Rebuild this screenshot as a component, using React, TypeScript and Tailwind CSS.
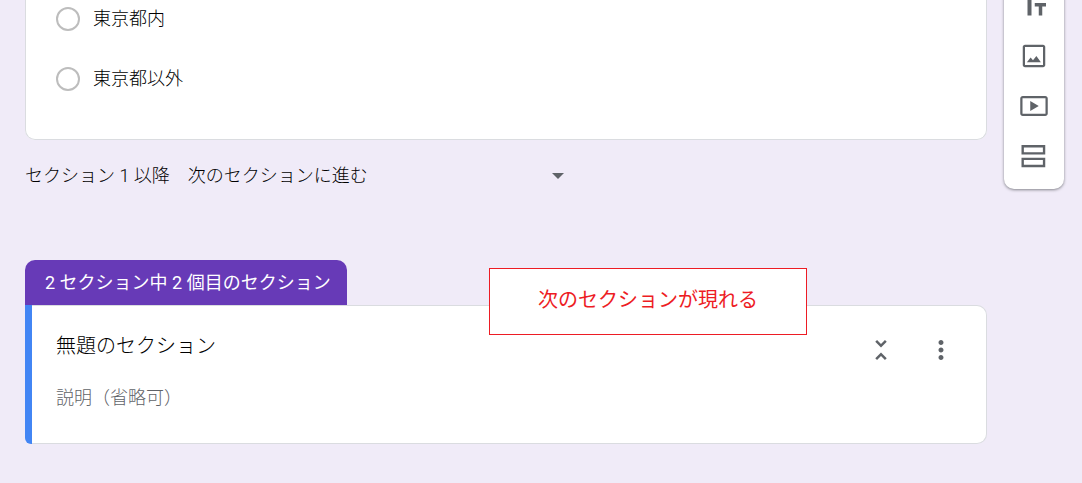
import type { ReactNode } from "react";

const options = ["東京都内", "東京都以外"];

function Icon({ children }: { children: ReactNode }) {
  return (
    <svg
      viewBox="0 0 24 24"
      className="h-[30px] w-[30px]"
      fill="currentColor"
      aria-hidden="true"
    >
      {children}
    </svg>
  );
}

const tools = [
  {
    label: "タイトルと説明を追加",
    icon: <path d="M2 4v3h4.800v12.600h3.200V7h5V4H2zM21.600 9.600h-9v2.800h3.200v7.200h2.800v-7.200h3V9.600z" />,
  },
  {
    label: "画像を追加",
    icon: (
      <path d="M19.200 4.800v14.400H4.800V4.800h14.400m0-1.800H4.800C3.800 3 3 3.800 3 4.800v14.400c0 1 .8 1.800 1.800 1.800h14.400c1 0 1.800-.8 1.800-1.800V4.800c0-1-.8-1.800-1.800-1.800zM13.900 12l-2.700 3.300-1.900-2.100L6.300 17h11.200z" />
    ),
  },
  {
    label: "動画を追加",
    icon: (
      <path d="M9 8v8l6.800-4zM21 4H3c-1.100 0-2 .9-2 2v12c0 1.100.9 2 2 2h18c1.100 0 2-.9 2-2V6c0-1.100-.9-2-2-2zm.2 14.200H2.800V5.800h18.400v12.400z" />
    ),
  },
  {
    label: "セクションを追加",
    icon: (
      <path
        fillRule="evenodd"
        d="M2 3.200h19v7.600H2V3.200zm1.900 1.900v3.800h15.200V5.100H3.900zM2 13.300h19v7.600H2v-7.600zm1.900 1.900V19h15.200v-3.800H3.900z"
      />
    ),
  },
];

export default function App() {
  return (
    <div className="flex min-h-screen items-start gap-[17px] overflow-hidden bg-[#f0ebf8] pr-[18px] pl-[25px] font-['Roboto','Noto_Sans_CJK_JP',sans-serif] text-[18px] leading-6 font-light text-black">
      <main className="min-w-0 flex-1">
        {/* Question card */}
        <fieldset
          aria-label="お住まい"
          className="flex flex-col gap-9 rounded-b-[10px] border border-t-0 border-[#dadce0] bg-white px-[30px] pt-[7px] pb-12"
        >
          {options.map((option) => (
            <label key={option} className="flex items-center gap-[13px]">
              <input
                type="radio"
                name="area"
                className="h-6 w-6 appearance-none rounded-full border-2 border-[#bdbdbd] bg-white checked:border-[7px] checked:border-[#673ab7]"
              />
              {option}
            </label>
          ))}
        </fieldset>

        {/* Where to go after section 1 */}
        <div className="mt-6 flex items-center gap-[18px]">
          <label htmlFor="next">セクション 1 以降</label>
          <div className="grid w-96 items-center">
            <select
              id="next"
              className="col-start-1 row-start-1 w-full appearance-none bg-transparent pr-8"
            >
              <option>次のセクションに進む</option>
            </select>
            <svg
              viewBox="0 0 12 6"
              className="pointer-events-none col-start-1 row-start-1 mr-2 h-[6px] w-3 justify-self-end"
              fill="#5f6368"
              aria-hidden="true"
            >
              <path d="M0 0h12L6 6z" />
            </svg>
          </div>
        </div>

        {/* Section 2 */}
        <section className="relative mt-18">
          <h2 className="flex h-[45px] w-fit items-center rounded-t-[10px] bg-[#673ab7] pr-4 pl-5 font-normal text-white">
            2 セクション中 2 個目のセクション
          </h2>
          <div className="flex">
            <div className="w-[7px] rounded-bl-[6px] bg-[#4285f4]" />
            <div className="flex flex-1 items-start justify-between rounded-r-[10px] border border-l-0 border-[#dadce0] bg-white pt-[26px] pr-[30px] pb-[31px] pl-6">
              <div className="flex flex-1 flex-col gap-6">
                <input
                  aria-label="セクションのタイトル"
                  defaultValue="無題のセクション"
                  className="h-7 w-full text-xl leading-7 outline-none"
                />
                <input
                  aria-label="説明"
                  placeholder="説明（省略可）"
                  className="h-7 w-full leading-7 outline-none placeholder:text-[#5f6368]"
                />
              </div>
              <div className="flex gap-[30px] pt-[3px] text-[#5f6368]">
                <button type="button" aria-label="セクションを折りたたむ">
                  <Icon>
                    <path d="M7.410 18.590L8.830 20 12 16.830 15.170 20l1.410-1.410L12 14l-4.590 4.590zm9.180-13.180L15.170 4 12 7.170 8.830 4 7.410 5.410 12 10l4.590-4.590z" />
                  </Icon>
                </button>
                <button type="button" aria-label="その他の操作">
                  <Icon>
                    <path d="M12 8c1.100 0 2-.9 2-2s-.9-2-2-2-2 .9-2 2 .9 2 2 2zm0 2c-1.100 0-2 .9-2 2s.9 2 2 2 2-.9 2-2-.9-2-2-2zm0 6c-1.100 0-2 .9-2 2s.9 2 2 2 2-.9 2-2-.9-2-2-2z" />
                  </Icon>
                </button>
              </div>
            </div>
          </div>

          {/* Annotation */}
          <p className="absolute top-2 left-[464px] flex h-[67px] w-[318px] items-center justify-center border border-[#ed1c24] bg-white pb-1 text-xl font-normal text-[#ed1c24]">
            次のセクションが現れる
          </p>
        </section>
      </main>

      {/* Toolbar */}
      <aside className="-mt-[19px] flex w-[60px] flex-col rounded-[10px] bg-white pb-2 text-[#5f6368] shadow-[0_1px_3px_rgba(60,64,67,0.6)]">
        {tools.map((tool) => (
          <button
            key={tool.label}
            type="button"
            aria-label={tool.label}
            className="flex h-[50px] items-center justify-center"
          >
            <Icon>{tool.icon}</Icon>
          </button>
        ))}
      </aside>
    </div>
  );
}
